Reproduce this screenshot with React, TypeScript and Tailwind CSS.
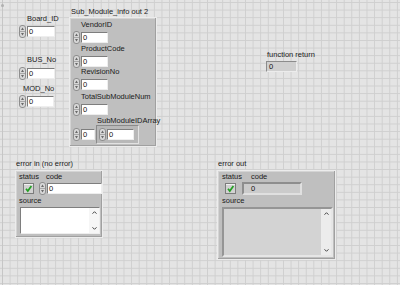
import React from "react";

const FONT = "font-['Liberation_Sans',Arial,sans-serif]";

function Label({ children, className = "" }: { children: React.ReactNode; className?: string }) {
  return (
    <div className={`text-[7.5px] leading-[8px] text-[#1a1a1a] whitespace-nowrap ${className}`}>
      {children}
    </div>
  );
}

function Spin() {
  return (
    <svg width="7" height="13" viewBox="0 0 7 13" className="block shrink-0">
      <rect x="0.5" y="0.5" width="6" height="12" rx="2.5" fill="#d8d8d8" stroke="#8e8e8e" />
      <line x1="1" y1="6.5" x2="6" y2="6.5" stroke="#a8a8a8" />
      <path d="M2 5 L3.5 2.6 L5 5 Z" fill="#6a6a6a" />
      <path d="M2 8 L3.5 10.4 L5 8 Z" fill="#6a6a6a" />
    </svg>
  );
}

function Num({ w }: { w: string }) {
  return (
    <div className="flex items-center gap-[1px]">
      <Spin />
      <div
        className={`h-[11px] ${w} bg-white border border-t-[#7e7e7e] border-l-[#7e7e7e] border-r-[#eeeeee] border-b-[#eeeeee] pl-[1px] text-[7.5px] leading-[9px] text-[#111]`}
      >
        0
      </div>
    </div>
  );
}

function Check() {
  return (
    <svg width="11" height="11" viewBox="0 0 11 11" className="block">
      <rect x="0.5" y="0.5" width="10" height="10" fill="#d2d2d2" stroke="#7c7c7c" />
      <line x1="1" y1="1.5" x2="10" y2="1.5" stroke="#f2f2f2" />
      <path d="M3 5.8 L4.8 8 L8.4 3" stroke="#23a023" strokeWidth="1.7" fill="none" />
    </svg>
  );
}

function ScrollBar({ bg }: { bg: string }) {
  return (
    <div className={`w-[10px] h-full ${bg} flex flex-col justify-between items-center py-[3px]`}>
      <svg width="5" height="3" viewBox="0 0 5 3" className="block">
        <path d="M0.5 2.7 L2.5 0.7 L4.5 2.7" stroke="#444" strokeWidth="1" fill="none" />
      </svg>
      <svg width="5" height="3" viewBox="0 0 5 3" className="block">
        <path d="M0.5 0.3 L2.5 2.3 L4.5 0.3" stroke="#444" strokeWidth="1" fill="none" />
      </svg>
    </div>
  );
}

const CLUSTER =
  "bg-[#bfbfbf] border border-[#ececec] shadow-[inset_-1px_-1px_0_#a0a0a0,inset_1px_1px_0_#d4d4d4]";

export default function App() {
  return (
    <div
      className={`relative w-[400px] h-[285px] overflow-hidden bg-[#e4e4e4] bg-[linear-gradient(to_right,#cfcfcf_1px,transparent_1px),linear-gradient(to_bottom,#cfcfcf_1px,transparent_1px)] bg-[size:7.6px_7.6px] bg-[position:2px_2px] ${FONT}`}
    >
      {/* panel origin mark */}
      <div className="absolute left-[2px] top-0 w-px h-full bg-[#c6c6c6]" />
      <div className="absolute left-[1px] top-[4px] w-[3px] h-[3px] rounded-full bg-[#b0b0b0]" />

      {/* Board_ID */}
      <div className="absolute left-[19px] top-[15px] flex flex-col">
        <Label className="ml-[8px]">Board_ID</Label>
        <div className="mt-[2px]">
          <Num w="w-[28px]" />
        </div>
      </div>

      {/* BUS_No */}
      <div className="absolute left-[19px] top-[56px] flex flex-col">
        <Label className="ml-[8px]">BUS_No</Label>
        <div className="mt-[3px]">
          <Num w="w-[28px]" />
        </div>
      </div>

      {/* MOD_No */}
      <div className="absolute left-[19px] top-[85px] flex flex-col">
        <Label className="ml-[4px]">MOD_No</Label>
        <div className="mt-[2px]">
          <Num w="w-[27px]" />
        </div>
      </div>

      {/* Sub_Module_info out 2 cluster */}
      <div className="absolute left-[69px] top-[8px] flex flex-col">
        <Label className="ml-[2px]">Sub_Module_info out 2</Label>
        <div className={`mt-[1px] w-[88px] h-[130px] ${CLUSTER} pt-[3px] pl-[3px] flex flex-col`}>
          <Label className="ml-[8px]">VendorID</Label>
          <div className="mt-[2px]">
            <Num w="w-[27px]" />
          </div>
          <Label className="ml-[8px] mt-[1px]">ProductCode</Label>
          <div className="mt-[2px]">
            <Num w="w-[27px]" />
          </div>
          <Label className="ml-[8px]">RevisionNo</Label>
          <div className="mt-[2px]">
            <Num w="w-[27px]" />
          </div>
          <Label className="ml-[8px] mt-[2px]">TotalSubModuleNum</Label>
          <div className="mt-[2px]">
            <Num w="w-[27px]" />
          </div>
          <Label className="ml-[24px] mt-[1px]">SubModuleIDArray</Label>
          <div className="flex items-start">
            <div className="mt-[3px]">
              <Num w="w-[14px]" />
            </div>
            <div className="ml-[1px] w-[43px] h-[19px] bg-[#b8b8b8] border border-t-[#8a8a8a] border-l-[#8a8a8a] border-r-[#e2e2e2] border-b-[#e2e2e2] pl-[2px] pt-[2px]">
              <Num w="w-[27px]" />
            </div>
          </div>
        </div>
      </div>

      {/* function return */}
      <div className="absolute left-[266px] top-[51px] flex flex-col">
        <Label className="ml-[1px]">function return</Label>
        <div className="mt-[2px] w-[31px] h-[11px] bg-[#cfcfcf] border border-t-[#8c8c8c] border-l-[#8c8c8c] border-r-[#ececec] border-b-[#ececec] pl-[2px] text-[7.5px] leading-[9px] text-[#111]">
          0
        </div>
      </div>

      {/* error in (no error) */}
      <div className="absolute left-[15px] top-[160px] flex flex-col">
        <Label className="ml-[1px]">error in (no error)</Label>
        <div className={`mt-[2px] w-[88px] h-[68px] ${CLUSTER} pt-[2px] pl-[3px] flex flex-col`}>
          <div className="flex">
            <div className="w-[20px] flex flex-col">
              <Label>status</Label>
              <div className="mt-[2px] ml-[4px]">
                <Check />
              </div>
            </div>
            <div className="flex flex-col">
              <Label className="ml-[7px]">code</Label>
              <div className="mt-[1px]">
                <Num w="w-[55px]" />
              </div>
            </div>
          </div>
          <Label className="mt-[2px]">source</Label>
          <div className="mt-[2px] ml-[1px] w-[80px] h-[27px] bg-white border border-t-[#7e7e7e] border-l-[#7e7e7e] border-r-[#eeeeee] border-b-[#eeeeee] flex justify-end">
            <ScrollBar bg="bg-[#f6f6f6]" />
          </div>
        </div>
      </div>

      {/* error out */}
      <div className="absolute left-[217px] top-[160px] flex flex-col">
        <Label className="ml-[1px]">error out</Label>
        <div className={`mt-[2px] w-[119px] h-[90px] ${CLUSTER} pt-[2px] pl-[3px] flex flex-col`}>
          <div className="flex">
            <div className="w-[21px] flex flex-col">
              <Label className="ml-[1px]">status</Label>
              <div className="mt-[2px] ml-[4px]">
                <Check />
              </div>
            </div>
            <div className="flex flex-col">
              <Label className="ml-[9px]">code</Label>
              <div className="mt-[1px] w-[60px] h-[13px] bg-[#cbcbcb] border-2 border-t-[#8e8e8e] border-l-[#8e8e8e] border-r-[#e0e0e0] border-b-[#e0e0e0] pl-[7px] text-[7.5px] leading-[9px] text-[#111]">
                0
              </div>
            </div>
          </div>
          <Label className="mt-[2px] ml-[1px]">source</Label>
          <div className="mt-[2px] ml-[1px] w-[111px] h-[50px] bg-[#d3d3d3] border-2 border-t-[#959595] border-l-[#959595] border-r-[#e6e6e6] border-b-[#e6e6e6] flex justify-end">
            <ScrollBar bg="bg-[#ececec]" />
          </div>
        </div>
      </div>
    </div>
  );
}
